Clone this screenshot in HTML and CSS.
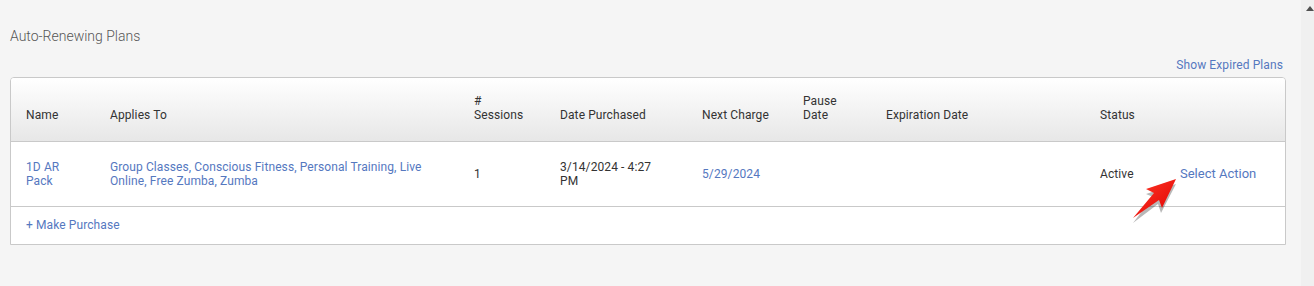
FILE: index.html
```html
<!DOCTYPE html>
<html lang="en">
  <head>
    <meta charset="UTF-8">
    <meta name="viewport" content="width=device-width, initial-scale=1.0">
    <title>Auto-Renewing Plans</title>
    <link rel="stylesheet" href="styles.css">
  </head>
  <body>
    <main class="page">
      <h2 class="section-title">Auto-Renewing Plans</h2>
      <div class="expired-link">
        <a href="#">Show Expired Plans</a>
      </div>
      <div class="plans-box">
        <table class="plans">
          <colgroup>
            <col style="width: 84px">
            <col style="width: 364px">
            <col style="width: 86px">
            <col style="width: 142px">
            <col style="width: 101px">
            <col style="width: 83px">
            <col style="width: 214px">
            <col style="width: 80px">
            <col style="width: 120px">
          </colgroup>
          <thead>
            <tr>
              <th>Name</th>
              <th>Applies To</th>
              <th>#<br>Sessions</th>
              <th>Date Purchased</th>
              <th>Next Charge</th>
              <th>Pause<br>Date</th>
              <th>Expiration Date</th>
              <th>Status</th>
              <th></th>
            </tr>
          </thead>
          <tbody>
            <tr>
              <td><a href="#">1D AR<br>Pack</a></td>
              <td><a href="#">Group Classes, Conscious Fitness, Personal Training, Live<br>Online, Free Zumba, Zumba</a></td>
              <td>1</td>
              <td>3/14/2024 - 4:27<br>PM</td>
              <td><a href="#">5/29/2024</a></td>
              <td></td>
              <td></td>
              <td>Active</td>
              <td><a class="action" href="#">Select Action</a></td>
            </tr>
          </tbody>
          <tfoot>
            <tr>
              <td colspan="9"><a href="#">+ Make Purchase</a></td>
            </tr>
          </tfoot>
        </table>
      </div>
      <svg class="pointer" width="56" height="48" viewBox="1126 176 56 48">
        <defs>
          <linearGradient id="red" x1="0" y1="0" x2="1" y2="1">
            <stop offset="0" stop-color="#ff3a2a"/>
            <stop offset="1" stop-color="#e00000"/>
          </linearGradient>
        </defs>
        <polygon points="1178,181 1148,191 1155,194 1135,220 1160,201 1163,210" fill="#000" opacity="0.28" transform="translate(-2,3)"/>
        <polygon points="1176,179 1146,189 1154,193 1133,218 1159,200 1162,208" fill="url(#red)"/>
      </svg>
    </main>
    <div class="scrollbar"><span class="scroll-up"></span></div>
  </body>
</html>
```

FILE: styles.css
```css
body {
  margin: 0;
  height: 286px;
  overflow: hidden;
  display: flex;
  background: #f5f5f5;
  font-family: Roboto, "Liberation Sans", Arial, sans-serif;
  font-size: 12px;
  letter-spacing: 0.1px;
  color: #333;
}
a {
  color: #5578bf;
  text-decoration: none;
}
.page {
  position: relative;
  flex: 1;
  padding: 28px 15px 0 10px;
}
.section-title {
  margin: 0;
  font-size: 14px;
  line-height: 16px;
  font-weight: 300;
  letter-spacing: 0;
  color: #555;
}
.expired-link {
  margin-top: 14px;
  padding-right: 3px;
  text-align: right;
  line-height: 14px;
}
.plans-box {
  margin-top: 5px;
  border: 1px solid #c9c9c9;
  border-radius: 4px 4px 0 0;
  background: #fff;
  overflow: hidden;
}
.plans {
  width: 100%;
  table-layout: fixed;
  border-collapse: collapse;
}
.plans th,
.plans td {
  padding: 0 15px;
  text-align: left;
  line-height: 14px;
}
.plans th {
  height: 63px;
  padding-bottom: 19px;
  box-sizing: border-box;
  vertical-align: bottom;
  font-weight: normal;
  color: #333;
  background: linear-gradient(to bottom, #ffffff, #e7e7e7);
  border-bottom: 1px solid #c9c9c9;
}
.plans tbody td {
  height: 65px;
  box-sizing: border-box;
  vertical-align: middle;
  border-bottom: 1px solid #c9c9c9;
}
.plans tfoot td {
  height: 37px;
  vertical-align: middle;
}
.plans .action {
  font-size: 13px;
  letter-spacing: 0;
}
.pointer {
  position: absolute;
  left: 1126px;
  top: 176px;
}
.scrollbar {
  width: 13px;
  flex-shrink: 0;
  background: #f0f0f0;
  position: relative;
}
.scroll-up {
  position: absolute;
  top: 6px;
  left: 5px;
  border-left: 4px solid transparent;
  border-right: 4px solid transparent;
  border-bottom: 5px solid #505050;
}
```
